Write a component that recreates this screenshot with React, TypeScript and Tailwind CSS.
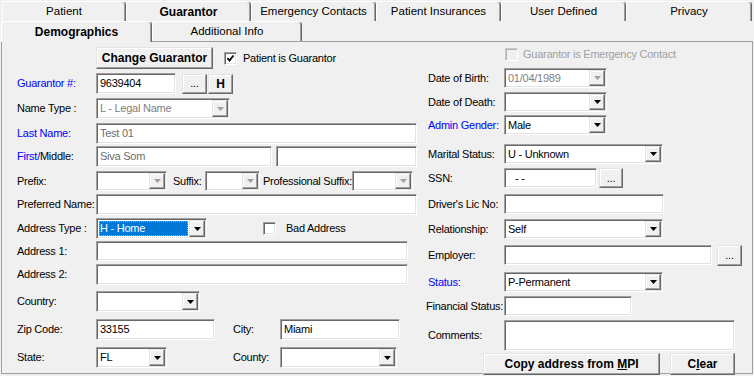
import React from 'react';

const sunken =
  'border border-t-[#a0a0a0] border-l-[#a0a0a0] border-r-white border-b-white shadow-[inset_1px_1px_0_#696969,inset_-1px_-1px_0_#e3e3e3]';
const raised =
  'border border-t-[#e3e3e3] border-l-[#e3e3e3] border-r-[#696969] border-b-[#696969] shadow-[inset_-1px_-1px_0_#a0a0a0,inset_1px_1px_0_#ffffff] bg-[#f0f0f0]';

function Arrow({ off }: { off?: boolean }) {
  return (
    <svg width="7" height="4" viewBox="0 0 7 4">
      <polygon points="0,0 7,0 3.5,4" fill={off ? '#a0a0a0' : '#000000'} />
    </svg>
  );
}

function Combo({ className = '', value = '', off, hl }: { className?: string; value?: string; off?: boolean; hl?: boolean }) {
  return (
    <div className={`${sunken} bg-white flex items-stretch p-[1px] shrink-0 ${className}`}>
      <div className="flex-1 flex items-center pl-[1px] py-[1px] pr-[1px] overflow-hidden">
        {hl ? (
          <span className="h-full w-full flex items-center bg-[#0078d7] text-white pl-[1px] outline outline-1 outline-dotted outline-[#ff9a2e] -outline-offset-1">
            {value}
          </span>
        ) : (
          <span className={`pl-[1px] ${off ? 'text-[#808080]' : 'text-black'}`}>{value}</span>
        )}
      </div>
      <div className={`w-[16px] flex items-center justify-center ${raised}`}>
        <Arrow off={off} />
      </div>
    </div>
  );
}

function Field({ className = '', value = '', muted }: { className?: string; value?: string; muted?: boolean }) {
  return (
    <div className={`${sunken} bg-white flex items-center pl-[3px] shrink-0 ${muted ? 'text-[#6d6d6d]' : 'text-black'} ${className}`}>
      {value}
    </div>
  );
}

function Btn({ className = '', children }: { className?: string; children: React.ReactNode }) {
  return <div className={`${raised} flex items-center justify-center shrink-0 ${className}`}>{children}</div>;
}

function Check({ on, off }: { on?: boolean; off?: boolean }) {
  return (
    <div
      className={`w-[13px] h-[13px] shrink-0 flex items-center justify-center ${
        off
          ? 'border border-t-[#c8c8c8] border-l-[#c8c8c8] border-r-white border-b-white shadow-[inset_1px_1px_0_#b4b4b4] bg-[#f0f0f0]'
          : `${sunken} bg-white`
      }`}
    >
      {on && (
        <svg width="9" height="9" viewBox="0 0 9 9">
          <polyline points="1.5,4.2 3.5,6.5 7.5,1.5" fill="none" stroke="#000000" strokeWidth="1.8" />
        </svg>
      )}
    </div>
  );
}

function Tab({ label, sel, className = '' }: { label: string; sel?: boolean; className?: string }) {
  return (
    <div
      className={`flex items-center justify-center shrink-0 bg-[#f0f0f0] border-t border-l border-r border-t-white border-l-white border-r-[#696969] shadow-[inset_-1px_0_0_#a0a0a0] rounded-tl-[2px] rounded-tr-[4px] ${
        sel ? 'font-bold text-[12px] tracking-normal' : 'text-[11.5px] tracking-normal'
      } ${className}`}
    >
      {label}
    </div>
  );
}

function Row({ className = '', children }: { className?: string; children: React.ReactNode }) {
  return <div className={`flex items-center ${className}`}>{children}</div>;
}

export default function App() {
  return (
    <div className="w-[754px] h-[376px] bg-[#f0f0f0] overflow-hidden font-['Liberation_Sans',Arial,sans-serif] text-[11px] tracking-[-0.25px] text-black leading-none whitespace-nowrap select-none">
      {/* tabs row 1 */}
      <div className="flex h-[21px] pl-[2px] pt-[1px]">
        <Tab label="Patient" className="w-[124px]" />
        <Tab label="Guarantor" sel className="w-[125px]" />
        <Tab label="Emergency Contacts" className="w-[125px]" />
        <Tab label="Patient Insurances" className="w-[125px]" />
        <Tab label="User Defined" className="w-[125px]" />
        <Tab label="Privacy" className="w-[126px]" />
      </div>
      {/* tabs row 2 */}
      <div className="flex h-[20px] pl-[1px] relative z-10">
        <Tab label="Demographics" sel className="w-[151px] h-[21px]" />
        <Tab label="Additional Info" className="w-[150px] h-[20px]" />
      </div>

      {/* panel */}
      <div className="ml-[1px] w-[752px] h-[333px] border border-[#a0a0a0] flex">
        {/* left column */}
        <div className="w-[424px] pl-[15px] shrink-0">
          <Row className="mt-[5px] h-[22px]">
            <div className="w-[79px]" />
            <Btn className="w-[117px] h-[22px] font-bold text-[12px] tracking-normal">Change Guarantor</Btn>
            <div className="ml-[11px]">
              <Check on />
            </div>
            <span className="ml-[6px]">Patient is Guarantor</span>
          </Row>
          <Row className="mt-[4px] h-[21px]">
            <span className="w-[79px] text-[#0000ff]">Guarantor #:</span>
            <Field className="w-[80px] h-[21px]" value="9639404" />
            <Btn className="ml-[6px] w-[25px] h-[20px]">...</Btn>
            <Btn className="ml-[1px] w-[25px] h-[20px] font-bold text-[12px]">H</Btn>
          </Row>
          <Row className="mt-[4px] h-[21px]">
            <span className="w-[79px]">Name Type :</span>
            <Combo className="w-[134px] h-[21px]" value="L - Legal Name" off />
          </Row>
          <Row className="mt-[4px] h-[21px]">
            <span className="w-[79px] text-[#0000ff]">Last Name:</span>
            <Field className="w-[321px] h-[21px]" value="Test 01" muted />
          </Row>
          <Row className="mt-[2px] h-[21px]">
            <span className="w-[79px]">
              <span className="text-[#0000ff]">First/</span>Middle:
            </span>
            <Field className="w-[176px] h-[21px]" value="Siva Som" muted />
            <Field className="ml-[4px] w-[141px] h-[21px]" />
          </Row>
          <Row className="mt-[4px] h-[20px]">
            <span className="w-[79px]">Prefix:</span>
            <Combo className="w-[71px] h-[20px]" off />
            <span className="ml-[6px] w-[32px]">Suffix:</span>
            <Combo className="w-[55px] h-[20px]" off />
            <span className="ml-[3px] w-[89px]">Professional Suffix:</span>
            <Combo className="w-[61px] h-[20px]" off />
          </Row>
          <Row className="mt-[3px] h-[21px]">
            <span className="w-[79px]">Preferred Name:</span>
            <Field className="w-[321px] h-[21px]" />
          </Row>
          <Row className="mt-[3px] h-[21px]">
            <span className="w-[79px]">Address Type :</span>
            <Combo className="w-[111px] h-[21px]" value="H - Home" hl />
            <div className="ml-[56px]">
              <Check />
            </div>
            <span className="ml-[10px]">Bad Address</span>
          </Row>
          <Row className="mt-[2px] h-[20px]">
            <span className="w-[79px]">Address 1:</span>
            <Field className="w-[312px] h-[20px]" />
          </Row>
          <Row className="mt-[3px] h-[21px]">
            <span className="w-[79px]">Address 2:</span>
            <Field className="w-[312px] h-[21px]" />
          </Row>
          <Row className="mt-[6px] h-[21px]">
            <span className="w-[79px]">Country:</span>
            <Combo className="w-[104px] h-[21px]" />
          </Row>
          <Row className="mt-[7px] h-[21px]">
            <span className="w-[79px]">Zip Code:</span>
            <Field className="w-[119px] h-[21px]" value="33155" />
            <span className="ml-[18px] w-[47px]">City:</span>
            <Field className="w-[120px] h-[21px]" value="Miami" />
          </Row>
          <Row className="mt-[7px] h-[21px]">
            <span className="w-[79px]">State:</span>
            <Combo className="w-[71px] h-[21px]" value="FL" />
            <span className="ml-[66px] w-[47px]">County:</span>
            <Combo className="w-[117px] h-[21px]" />
          </Row>
        </div>

        {/* right column */}
        <div className="flex-1">
          <Row className="mt-[5px] h-[14px]">
            <div className="w-[79px]" />
            <Check off />
            <span className="ml-[5px] text-[#a0a0a0]">Guarantor is Emergency Contact</span>
          </Row>
          <Row className="mt-[7px] h-[20px]">
            <span className="w-[78px] pl-[2px]">Date of Birth:</span>
            <Combo className="w-[103px] h-[20px]" value="01/04/1989" off />
          </Row>
          <Row className="mt-[4px] h-[20px]">
            <span className="w-[78px] pl-[2px]">Date of Death:</span>
            <Combo className="w-[103px] h-[20px]" />
          </Row>
          <Row className="mt-[3px] h-[20px]">
            <span className="w-[78px] pl-[2px] text-[#0000ff]">Admin Gender:</span>
            <Combo className="w-[103px] h-[20px]" value="Male" />
          </Row>
          <Row className="mt-[9px] h-[20px]">
            <span className="w-[78px] pl-[2px]">Marital Status:</span>
            <Combo className="w-[159px] h-[20px]" value="U - Unknown" />
          </Row>
          <Row className="mt-[4px] h-[20px]">
            <span className="w-[78px] pl-[2px]">SSN:</span>
            <Field className="w-[93px] h-[20px] pl-[10px]" value="-  -" />
            <Btn className="ml-[2px] w-[24px] h-[20px]">...</Btn>
          </Row>
          <Row className="mt-[6px] h-[20px]">
            <span className="w-[78px] pl-[2px]">Driver's Lic No:</span>
            <Field className="w-[160px] h-[20px]" />
          </Row>
          <Row className="mt-[5px] h-[20px]">
            <span className="w-[78px] pl-[2px]">Relationship:</span>
            <Combo className="w-[159px] h-[20px]" value="Self" />
          </Row>
          <Row className="mt-[6px] h-[20px]">
            <span className="w-[78px] pl-[2px]">Employer:</span>
            <Field className="w-[208px] h-[20px]" />
            <Btn className="ml-[5px] w-[25px] h-[21px] self-start">...</Btn>
          </Row>
          <Row className="mt-[7px] h-[20px]">
            <span className="w-[78px] pl-[2px] text-[#0000ff]">Status:</span>
            <Combo className="w-[159px] h-[20px]" value="P-Permanent" />
          </Row>
          <Row className="mt-[4px] h-[20px]">
            <span className="w-[78px]">Financial Status:</span>
            <Field className="w-[128px] h-[20px]" />
          </Row>
          <Row className="mt-[4px] h-[31px]">
            <span className="w-[78px] pl-[2px]">Comments:</span>
            <Field className="w-[231px] h-[31px]" />
          </Row>
          <Row className="mt-[2px] h-[22px]">
            <Btn className="ml-[57px] w-[177px] h-[22px] font-bold text-[12px] tracking-normal">
              Copy address from&nbsp;<span className="underline">M</span>PI
            </Btn>
            <Btn className="ml-[10px] w-[65px] h-[22px] font-bold text-[12px] tracking-normal">
              C<span className="underline">l</span>ear
            </Btn>
          </Row>
        </div>
      </div>
    </div>
  );
}
